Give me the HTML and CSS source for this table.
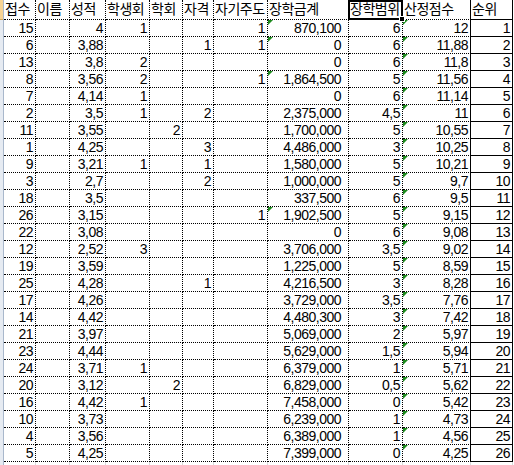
FILE: index.html
```html
<!DOCTYPE html>
<html lang="ko">
<head>
<meta charset="utf-8">
<title>장학 산정</title>
<link rel="stylesheet" href="styles.css">
</head>
<body>
<div class="page">
  <div class="strip"><div class="strip-head"></div></div>
  <div class="sheet">
    <div class="c h">접수</div><div class="c h">이름</div><div class="c h">성적</div><div class="c h">학생회</div><div class="c h">학회</div><div class="c h">자격</div><div class="c h">자기주도</div><div class="c h">장학금계</div><div class="c h sel">장학범위</div><div class="c h pre">산정점수</div><div class="c h rk">순위</div>

    <div class="c">15</div><div class="c"></div><div class="c">4</div><div class="c">1</div><div class="c"></div><div class="c"></div><div class="c">1</div><div class="c amt t">870,100</div><div class="c">6</div><div class="c pre t">12</div><div class="c rk">1</div>
    <div class="c">6</div><div class="c"></div><div class="c">3,88</div><div class="c"></div><div class="c"></div><div class="c">1</div><div class="c">1</div><div class="c amt t">0</div><div class="c">6</div><div class="c pre t">11,88</div><div class="c rk">2</div>
    <div class="c">13</div><div class="c"></div><div class="c">3,8</div><div class="c">2</div><div class="c"></div><div class="c"></div><div class="c"></div><div class="c amt">0</div><div class="c">6</div><div class="c pre t">11,8</div><div class="c rk">3</div>
    <div class="c">8</div><div class="c"></div><div class="c">3,56</div><div class="c">2</div><div class="c"></div><div class="c"></div><div class="c">1</div><div class="c amt t">1,864,500</div><div class="c">5</div><div class="c pre t">11,56</div><div class="c rk">4</div>
    <div class="c">7</div><div class="c"></div><div class="c">4,14</div><div class="c">1</div><div class="c"></div><div class="c"></div><div class="c"></div><div class="c amt">0</div><div class="c">6</div><div class="c pre t">11,14</div><div class="c rk">5</div>
    <div class="c">2</div><div class="c"></div><div class="c">3,5</div><div class="c">1</div><div class="c"></div><div class="c">2</div><div class="c"></div><div class="c amt">2,375,000</div><div class="c">4,5</div><div class="c pre t">11</div><div class="c rk">6</div>
    <div class="c">11</div><div class="c"></div><div class="c">3,55</div><div class="c"></div><div class="c">2</div><div class="c"></div><div class="c"></div><div class="c amt">1,700,000</div><div class="c">5</div><div class="c pre t">10,55</div><div class="c rk">7</div>
    <div class="c">1</div><div class="c"></div><div class="c">4,25</div><div class="c"></div><div class="c"></div><div class="c">3</div><div class="c"></div><div class="c amt">4,486,000</div><div class="c">3</div><div class="c pre t">10,25</div><div class="c rk">8</div>
    <div class="c">9</div><div class="c"></div><div class="c">3,21</div><div class="c">1</div><div class="c"></div><div class="c">1</div><div class="c"></div><div class="c amt">1,580,000</div><div class="c">5</div><div class="c pre t">10,21</div><div class="c rk">9</div>
    <div class="c">3</div><div class="c"></div><div class="c">2,7</div><div class="c"></div><div class="c"></div><div class="c">2</div><div class="c"></div><div class="c amt">1,000,000</div><div class="c">5</div><div class="c pre t">9,7</div><div class="c rk">10</div>
    <div class="c">18</div><div class="c"></div><div class="c">3,5</div><div class="c"></div><div class="c"></div><div class="c"></div><div class="c"></div><div class="c amt">337,500</div><div class="c">6</div><div class="c pre t">9,5</div><div class="c rk">11</div>
    <div class="c">26</div><div class="c"></div><div class="c">3,15</div><div class="c"></div><div class="c"></div><div class="c"></div><div class="c">1</div><div class="c amt t">1,902,500</div><div class="c">5</div><div class="c pre t">9,15</div><div class="c rk">12</div>
    <div class="c">22</div><div class="c"></div><div class="c">3,08</div><div class="c"></div><div class="c"></div><div class="c"></div><div class="c"></div><div class="c amt">0</div><div class="c">6</div><div class="c pre t">9,08</div><div class="c rk">13</div>
    <div class="c">12</div><div class="c"></div><div class="c">2,52</div><div class="c">3</div><div class="c"></div><div class="c"></div><div class="c"></div><div class="c amt">3,706,000</div><div class="c">3,5</div><div class="c pre t">9,02</div><div class="c rk">14</div>
    <div class="c">19</div><div class="c"></div><div class="c">3,59</div><div class="c"></div><div class="c"></div><div class="c"></div><div class="c"></div><div class="c amt">1,225,000</div><div class="c">5</div><div class="c pre t">8,59</div><div class="c rk">15</div>
    <div class="c">25</div><div class="c"></div><div class="c">4,28</div><div class="c"></div><div class="c"></div><div class="c">1</div><div class="c"></div><div class="c amt">4,216,500</div><div class="c">3</div><div class="c pre t">8,28</div><div class="c rk">16</div>
    <div class="c">17</div><div class="c"></div><div class="c">4,26</div><div class="c"></div><div class="c"></div><div class="c"></div><div class="c"></div><div class="c amt">3,729,000</div><div class="c">3,5</div><div class="c pre t">7,76</div><div class="c rk">17</div>
    <div class="c">14</div><div class="c"></div><div class="c">4,42</div><div class="c"></div><div class="c"></div><div class="c"></div><div class="c"></div><div class="c amt">4,480,300</div><div class="c">3</div><div class="c pre t">7,42</div><div class="c rk">18</div>
    <div class="c">21</div><div class="c"></div><div class="c">3,97</div><div class="c"></div><div class="c"></div><div class="c"></div><div class="c"></div><div class="c amt">5,069,000</div><div class="c">2</div><div class="c pre t">5,97</div><div class="c rk">19</div>
    <div class="c">23</div><div class="c"></div><div class="c">4,44</div><div class="c"></div><div class="c"></div><div class="c"></div><div class="c"></div><div class="c amt">5,629,000</div><div class="c">1,5</div><div class="c pre t">5,94</div><div class="c rk">20</div>
    <div class="c">24</div><div class="c"></div><div class="c">3,71</div><div class="c">1</div><div class="c"></div><div class="c"></div><div class="c"></div><div class="c amt">6,379,000</div><div class="c">1</div><div class="c pre t">5,71</div><div class="c rk">21</div>
    <div class="c">20</div><div class="c"></div><div class="c">3,12</div><div class="c"></div><div class="c">2</div><div class="c"></div><div class="c"></div><div class="c amt">6,829,000</div><div class="c">0,5</div><div class="c pre t">5,62</div><div class="c rk">22</div>
    <div class="c">16</div><div class="c"></div><div class="c">4,42</div><div class="c">1</div><div class="c"></div><div class="c"></div><div class="c"></div><div class="c amt">7,458,000</div><div class="c">0</div><div class="c pre t">5,42</div><div class="c rk">23</div>
    <div class="c">10</div><div class="c"></div><div class="c">3,73</div><div class="c"></div><div class="c"></div><div class="c"></div><div class="c"></div><div class="c amt">6,239,000</div><div class="c">1</div><div class="c pre t">4,73</div><div class="c rk">24</div>
    <div class="c">4</div><div class="c"></div><div class="c">3,56</div><div class="c"></div><div class="c"></div><div class="c"></div><div class="c"></div><div class="c amt">6,389,000</div><div class="c">1</div><div class="c pre t">4,56</div><div class="c rk">25</div>
    <div class="c">5</div><div class="c"></div><div class="c">4,25</div><div class="c"></div><div class="c"></div><div class="c"></div><div class="c"></div><div class="c amt">7,399,000</div><div class="c">0</div><div class="c pre t">4,25</div><div class="c rk">26</div>

    <div class="g"></div><div class="g"></div><div class="g"></div><div class="g"></div><div class="g"></div><div class="g"></div><div class="g"></div><div class="g"></div><div class="g"></div><div class="g"></div><div class="g"></div>
  </div>
</div>
</body>
</html>
```

FILE: styles.css
```css
html, body {
  margin: 0;
  padding: 0;
  background: #fff;
}

body {
  font-family: "Liberation Sans", "Noto Sans CJK KR", sans-serif;
  font-size: 14px;
  letter-spacing: -0.5px;
  color: #000;
}

.page {
  display: flex;
  height: 465px;
  overflow: hidden;
}

.strip {
  width: 3px;
  flex: none;
  border-right: 1px solid #a9b8cc;
  background: #e6ebf2;
  display: flex;
  flex-direction: column;
}

.strip-head {
  height: 19px;
  background: #f7d394;
  border-bottom: 1px solid #d2a75e;
}

.sheet {
  display: grid;
  grid-template-columns: 32px 34px 36px 44px 33px 31px 54px 81px 54px 68px 42px;
  grid-template-rows: 20px repeat(26, 17px) 10px;
  align-content: start;
}

.c {
  box-sizing: border-box;
  position: relative;
  border-right: 1px dotted #000;
  border-bottom: 1px dotted #000;
  line-height: 17px;
  text-align: right;
  padding-right: 2px;
  white-space: nowrap;
}

.h {
  text-align: left;
  padding: 0 0 0 1px;
  line-height: 19px;
}

.amt {
  padding-right: 7px;
}

.pre {
  border-right: 1px solid #000;
}

.rk {
  border-right: 1px solid #000;
  border-bottom: 1px solid #000;
}

.t::before {
  content: "";
  position: absolute;
  left: 0;
  top: 0;
  width: 0;
  height: 0;
  border-top: 5px solid #1c8a1c;
  border-right: 5px solid transparent;
}

.sel::after {
  content: "";
  position: absolute;
  left: -1px;
  top: 0;
  right: -1px;
  bottom: -1px;
  border: 2px solid #000;
  pointer-events: none;
}

.sel::before {
  content: "";
  position: absolute;
  right: -3px;
  bottom: -3px;
  width: 4px;
  height: 4px;
  background: #000;
  border: 1px solid #fff;
  z-index: 1;
}

.g {
  box-sizing: border-box;
  border-right: 1px solid #dadcdd;
}
```
